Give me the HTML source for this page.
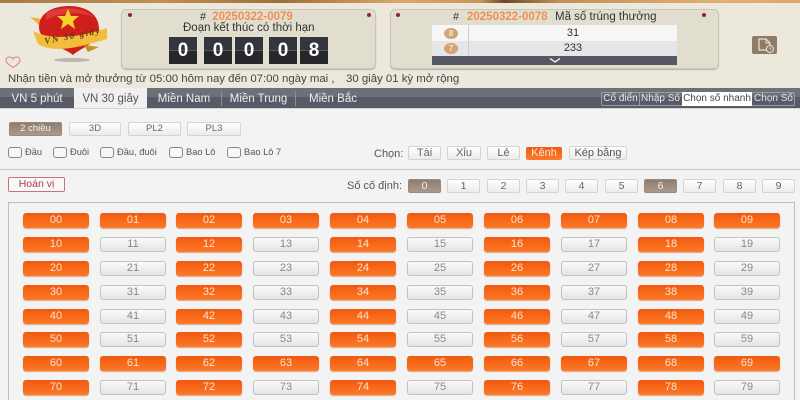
<!DOCTYPE html>
<html><head><meta charset="utf-8">
<style>
html,body{margin:0;padding:0;width:800px;height:400px;overflow:hidden}
#root{width:800px;height:400px;overflow:hidden;position:relative;background:#f3f3f3;font-family:"Liberation Sans",sans-serif;color:#444}
.a{position:absolute;white-space:nowrap}
.panel{position:absolute;top:9px;height:60px;box-sizing:border-box;background:#e2decf;border:1px solid #c9c6b8;border-radius:5px;box-shadow:0 1px 1px #b5b5ad}
.dot{position:absolute;width:4px;height:4px;border-radius:50%;background:#8f2233}
.dg{position:absolute;top:37px;width:28px;height:27px;background:linear-gradient(#33363c 0 49%,#55575c 49% 52%,#25272b 52%);color:#fff;font:bold 19px/27px "Liberation Sans",sans-serif;text-align:center}
.tab{position:absolute;top:89px;height:20px;font-size:11.5px;line-height:20px;color:#eeeef0;text-align:center}
.btn{position:absolute;box-sizing:border-box;height:14px;border:1px solid #d4d4d4;border-radius:2px;background:linear-gradient(#fff,#ebebeb);font-size:9.5px;line-height:12px;text-align:center;color:#666}
.br{background:linear-gradient(#8f7e70,#ab9a8c);border-color:#9a8b7e;color:#f5f0ea}
.cb{position:absolute;top:147px;width:14px;height:11px;border:1px solid #888;border-radius:3px;box-sizing:border-box;background:#f7f7f7}
.lb{position:absolute;top:146px;font-size:9.3px;line-height:12px;color:#555;white-space:nowrap}
.n{position:absolute;width:66px;height:15px;box-sizing:border-box;border-radius:3px;font-size:11px;line-height:15px;text-align:center}
.o{background:linear-gradient(#f1590f,#fb7a28);color:#fde3cf;box-shadow:0 1px 1px #d9a98a}
.w{background:linear-gradient(#fafafa,#e4e4e4);border:1px solid #c3c3bd;color:#888;line-height:13px}
.sub{position:absolute;top:92px;height:14px;box-sizing:border-box;font-size:10px;line-height:14px;color:#e8e8ea;text-align:center}
</style></head><body>
<div id="root">
<div class="a" style="left:0;top:0;width:800px;height:88px;background:#ece8dc"></div>
<div class="a" style="left:0;top:0;width:800px;height:3px;background:linear-gradient(90deg,#a87a48,#c08f58 20%,#a06e3c 35%,#dba868 50%,#c8965c 60%,#6e4a28 63%,#c09058 70%,#e0b078 90%,#d8a870)"></div>

<svg class="a" style="left:26px;top:3px" width="84" height="62" viewBox="0 0 84 62">
<ellipse cx="46" cy="57" rx="18" ry="2" fill="#9a9a90" opacity=".6"/>
<path d="M4 14L16 16L18 26Z" fill="#eeb22f"/>
<path d="M13 24C13 10 27 3 43 3C60 3 73 11 73 26C73 40 56 44 47 52C38 44 13 40 13 24Z" fill="#cf1f1c"/>
<path d="M20 10C30 4 55 2 68 14C52 8 34 9 20 17Z" fill="#e8504a" opacity=".6"/>
<path d="M42 6L45 13L53 13L47 18L49 26L42 21L35 26L37 18L31 13L39 13Z" fill="#f9d22e"/>
<path d="M7 28C25 38 55 34 81 25L81 36C60 42 30 52 12 41Z" fill="#f1bd3c"/>
<path d="M58 42L73 44L62 49Z" fill="#c99322"/>
<text x="19" y="41" transform="rotate(-11 19 41)" font-family="Liberation Serif,serif" font-style="italic" font-weight="bold" font-size="9" textLength="56" fill="#5a3a10">VN 30 giây</text>
</svg>
<svg class="a" style="left:4px;top:55px" width="18" height="14" viewBox="0 0 18 14"><path d="M9 12.5C4 9.5 2 7.5 2 5C2 3 3.5 2 5.2 2C7 2 8.5 3 9 4C9.5 3 11 2 12.8 2C14.5 2 16 3 16 5C16 7.5 14 9.5 9 12.5Z" fill="none" stroke="#d9808a" stroke-width="1"/></svg>

<div class="panel" style="left:121px;width:255px">
<div class="dot" style="left:6px;top:3px"></div><div class="dot" style="left:245px;top:3px"></div>
<div class="a" style="left:78px;top:1px;font-size:11px;line-height:13px;color:#333">#&nbsp; <b style="color:#f09050;font-size:11.5px">20250322-0079</b></div>
<div class="a" style="left:61px;top:11px;font-size:11.5px;line-height:14px;color:#333">Đoạn kết thúc có thời hạn</div>
</div>
<div class="dg" style="left:169px">0</div><div class="dg" style="left:204px">0</div><div class="dg" style="left:235px">0</div><div class="dg" style="left:269px">0</div><div class="dg" style="left:300px">8</div>

<div class="panel" style="left:390px;width:329px">
<div class="dot" style="left:5px;top:3px"></div><div class="dot" style="left:311px;top:3px"></div>
<div class="a" style="left:62px;top:0;font-size:11px;line-height:14px;color:#333">#</div>
<b class="a" style="left:76px;top:0;color:#f09050;font-size:11.5px;line-height:14px">20250322-0078</b>
<div class="a" style="left:164px;top:0;font-size:11.5px;line-height:14px;color:#333">Mã số trúng thưởng</div>
</div>
<div class="a" style="left:432px;top:25px;width:245px;height:16px;background:#f6f6f6"></div>
<div class="a" style="left:432px;top:41px;width:245px;height:15px;background:#e6e6e6"></div>
<div class="a" style="left:468px;top:25px;width:1px;height:31px;background:#cfcfcf"></div>
<div class="a" style="left:432px;top:56px;width:245px;height:9px;background:#555864"></div>
<div class="a" style="left:444px;top:28px;width:14px;height:11px;border-radius:50%;background:#d3a374;color:#f6e7d4;font:bold 8px/11px 'Liberation Sans',sans-serif;text-align:center">8</div>
<div class="a" style="left:444px;top:43px;width:14px;height:11px;border-radius:50%;background:#d3a374;color:#f6e7d4;font:bold 8px/11px 'Liberation Sans',sans-serif;text-align:center">7</div>
<div class="a" style="left:469px;top:25px;width:208px;height:16px;font-size:11px;line-height:16px;text-align:center;color:#333">31</div>
<div class="a" style="left:469px;top:41px;width:208px;height:15px;font-size:11px;line-height:15px;text-align:center;color:#333">233</div>
<svg class="a" style="left:549px;top:57px" width="12" height="7" viewBox="0 0 12 7"><path d="M1 1.5L6 5L11 1.5" fill="none" stroke="#fff" stroke-width="1.2"/></svg>

<svg class="a" style="left:752px;top:35px" width="26" height="20" viewBox="0 0 26 20"><rect width="25" height="18" y="1" rx="2" fill="#8e7c69"/><path d="M7 4H14L18 8V15H7Z" fill="none" stroke="#e8e2d8" stroke-width="1.2"/><path d="M14 4V8H18" fill="none" stroke="#e8e2d8" stroke-width="1"/><circle cx="18" cy="14" r="3.5" fill="#8e7c69" stroke="#e8e2d8" stroke-width="1"/><path d="M18 12V14H19.5" fill="none" stroke="#e8e2d8" stroke-width=".8"/></svg>

<div class="a" style="left:8px;top:72px;font-size:11.4px;line-height:15px;color:#444">Nhận tiền và mở thưởng từ 05:00 hôm nay đến 07:00 ngày mai ,</div>
<div class="a" style="left:346px;top:72px;font-size:11.4px;line-height:15px;color:#444">30 giây 01 kỳ mở rộng</div>

<div class="a" style="left:0;top:88px;width:800px;height:20px;background:linear-gradient(#6d7079 0 45%,#585b66 45%)"></div>
<div class="a" style="left:0;top:108px;width:800px;height:1px;background:#d6d6d6"></div>
<div class="tab" style="left:0;width:74px">VN 5 phút</div>
<div class="a" style="left:74px;top:88px;width:73px;height:20px;background:#f0f0f0"></div>
<div class="tab" style="left:74px;width:73px;color:#555">VN 30 giây</div>
<div class="tab" style="left:147px;width:74px">Miền Nam</div>
<div class="tab" style="left:222px;width:73px">Miền Trung</div>
<div class="tab" style="left:296px;width:74px">Miền Bắc</div>
<div class="a" style="left:221px;top:91px;width:1px;height:15px;background:#8d9098"></div>
<div class="a" style="left:295px;top:91px;width:1px;height:15px;background:#8d9098"></div>
<div class="a" style="left:601px;top:92px;width:194px;height:14px;border:1px solid #9a9da5;border-radius:2px;box-sizing:border-box"></div>
<div class="sub" style="left:601px;width:39px">Cổ điển</div>
<div class="a" style="left:639px;top:92px;width:1px;height:14px;background:#9a9da5"></div>
<div class="sub" style="left:640px;width:41px">Nhập Số</div>
<div class="sub" style="left:682px;width:70px;background:#fff;color:#444">Chọn số nhanh</div>
<div class="sub" style="left:752px;width:43px">Chọn Số</div>

<div class="btn br" style="left:9px;top:122px;width:53px">2 chiều</div>
<div class="btn" style="left:69px;top:122px;width:52px">3D</div>
<div class="btn" style="left:128px;top:122px;width:53px">PL2</div>
<div class="btn" style="left:187px;top:122px;width:54px">PL3</div>

<div class="cb" style="left:8px"></div><div class="lb" style="left:25px">Đầu</div>
<div class="cb" style="left:53px"></div><div class="lb" style="left:70px">Đuôi</div>
<div class="cb" style="left:100px"></div><div class="lb" style="left:117px">Đầu, đuôi</div>
<div class="cb" style="left:169px"></div><div class="lb" style="left:186px">Bao Lô</div>
<div class="cb" style="left:227px"></div><div class="lb" style="left:244px">Bao Lô 7</div>

<div class="a" style="left:374px;top:147px;font-size:11px;line-height:14px;color:#555">Chọn:</div>
<div class="btn" style="left:408px;top:146px;width:33px;font-size:11px">Tài</div>
<div class="btn" style="left:447px;top:146px;width:34px;font-size:11px">Xỉu</div>
<div class="btn" style="left:487px;top:146px;width:33px;font-size:11px">Lẻ</div>
<div class="btn" style="left:526px;top:147px;width:36px;height:13px;font-size:11px;background:linear-gradient(#ef5b12,#fb7a28);border:0;color:#fde8d8">Kênh</div>
<div class="btn" style="left:569px;top:146px;width:58px;font-size:11px;color:#555">Kép bằng</div>

<div class="a" style="left:0;top:169px;width:800px;height:1px;background:#c6c6c6"></div>

<div class="a" style="left:8px;top:177px;width:57px;height:15px;box-sizing:border-box;border:1px solid #c8737a;border-radius:2px;background:#f8f8f8;color:#b23a48;font-size:10.5px;line-height:13px;text-align:center">Hoán vị</div>
<div class="a" style="left:347px;top:179px;font-size:11px;line-height:14px;color:#555">Số cố định:</div>
<div class="btn br" style="left:408px;top:179px;width:33px;font-size:10.5px">0</div>
<div class="btn" style="left:447px;top:179px;width:33px;font-size:10.5px">1</div>
<div class="btn" style="left:487px;top:179px;width:33px;font-size:10.5px">2</div>
<div class="btn" style="left:526px;top:179px;width:33px;font-size:10.5px">3</div>
<div class="btn" style="left:565px;top:179px;width:33px;font-size:10.5px">4</div>
<div class="btn" style="left:605px;top:179px;width:33px;font-size:10.5px">5</div>
<div class="btn br" style="left:644px;top:179px;width:33px;font-size:10.5px">6</div>
<div class="btn" style="left:683px;top:179px;width:33px;font-size:10.5px">7</div>
<div class="btn" style="left:723px;top:179px;width:33px;font-size:10.5px">8</div>
<div class="btn" style="left:762px;top:179px;width:33px;font-size:10.5px">9</div>

<div class="a" style="left:8px;top:202px;width:787px;height:198px;box-sizing:border-box;border:1px solid #bdbdbd;border-bottom:0;background:#f3f3f3"></div>

<div id="g">
<div class="n o" style="left:23px;top:213px">00</div><div class="n o" style="left:100px;top:213px">01</div><div class="n o" style="left:176px;top:213px">02</div><div class="n o" style="left:253px;top:213px">03</div><div class="n o" style="left:330px;top:213px">04</div><div class="n o" style="left:407px;top:213px">05</div><div class="n o" style="left:484px;top:213px">06</div><div class="n o" style="left:561px;top:213px">07</div><div class="n o" style="left:638px;top:213px">08</div><div class="n o" style="left:714px;top:213px">09</div>
<div class="n o" style="left:23px;top:237px">10</div><div class="n w" style="left:100px;top:237px">11</div><div class="n o" style="left:176px;top:237px">12</div><div class="n w" style="left:253px;top:237px">13</div><div class="n o" style="left:330px;top:237px">14</div><div class="n w" style="left:407px;top:237px">15</div><div class="n o" style="left:484px;top:237px">16</div><div class="n w" style="left:561px;top:237px">17</div><div class="n o" style="left:638px;top:237px">18</div><div class="n w" style="left:714px;top:237px">19</div>
<div class="n o" style="left:23px;top:261px">20</div><div class="n w" style="left:100px;top:261px">21</div><div class="n o" style="left:176px;top:261px">22</div><div class="n w" style="left:253px;top:261px">23</div><div class="n o" style="left:330px;top:261px">24</div><div class="n w" style="left:407px;top:261px">25</div><div class="n o" style="left:484px;top:261px">26</div><div class="n w" style="left:561px;top:261px">27</div><div class="n o" style="left:638px;top:261px">28</div><div class="n w" style="left:714px;top:261px">29</div>
<div class="n o" style="left:23px;top:285px">30</div><div class="n w" style="left:100px;top:285px">31</div><div class="n o" style="left:176px;top:285px">32</div><div class="n w" style="left:253px;top:285px">33</div><div class="n o" style="left:330px;top:285px">34</div><div class="n w" style="left:407px;top:285px">35</div><div class="n o" style="left:484px;top:285px">36</div><div class="n w" style="left:561px;top:285px">37</div><div class="n o" style="left:638px;top:285px">38</div><div class="n w" style="left:714px;top:285px">39</div>
<div class="n o" style="left:23px;top:309px">40</div><div class="n w" style="left:100px;top:309px">41</div><div class="n o" style="left:176px;top:309px">42</div><div class="n w" style="left:253px;top:309px">43</div><div class="n o" style="left:330px;top:309px">44</div><div class="n w" style="left:407px;top:309px">45</div><div class="n o" style="left:484px;top:309px">46</div><div class="n w" style="left:561px;top:309px">47</div><div class="n o" style="left:638px;top:309px">48</div><div class="n w" style="left:714px;top:309px">49</div>
<div class="n o" style="left:23px;top:332px">50</div><div class="n w" style="left:100px;top:332px">51</div><div class="n o" style="left:176px;top:332px">52</div><div class="n w" style="left:253px;top:332px">53</div><div class="n o" style="left:330px;top:332px">54</div><div class="n w" style="left:407px;top:332px">55</div><div class="n o" style="left:484px;top:332px">56</div><div class="n w" style="left:561px;top:332px">57</div><div class="n o" style="left:638px;top:332px">58</div><div class="n w" style="left:714px;top:332px">59</div>
<div class="n o" style="left:23px;top:356px">60</div><div class="n o" style="left:100px;top:356px">61</div><div class="n o" style="left:176px;top:356px">62</div><div class="n o" style="left:253px;top:356px">63</div><div class="n o" style="left:330px;top:356px">64</div><div class="n o" style="left:407px;top:356px">65</div><div class="n o" style="left:484px;top:356px">66</div><div class="n o" style="left:561px;top:356px">67</div><div class="n o" style="left:638px;top:356px">68</div><div class="n o" style="left:714px;top:356px">69</div>
<div class="n o" style="left:23px;top:380px">70</div><div class="n w" style="left:100px;top:380px">71</div><div class="n o" style="left:176px;top:380px">72</div><div class="n w" style="left:253px;top:380px">73</div><div class="n o" style="left:330px;top:380px">74</div><div class="n w" style="left:407px;top:380px">75</div><div class="n o" style="left:484px;top:380px">76</div><div class="n w" style="left:561px;top:380px">77</div><div class="n o" style="left:638px;top:380px">78</div><div class="n w" style="left:714px;top:380px">79</div>
</div>
</div>
</body></html>
